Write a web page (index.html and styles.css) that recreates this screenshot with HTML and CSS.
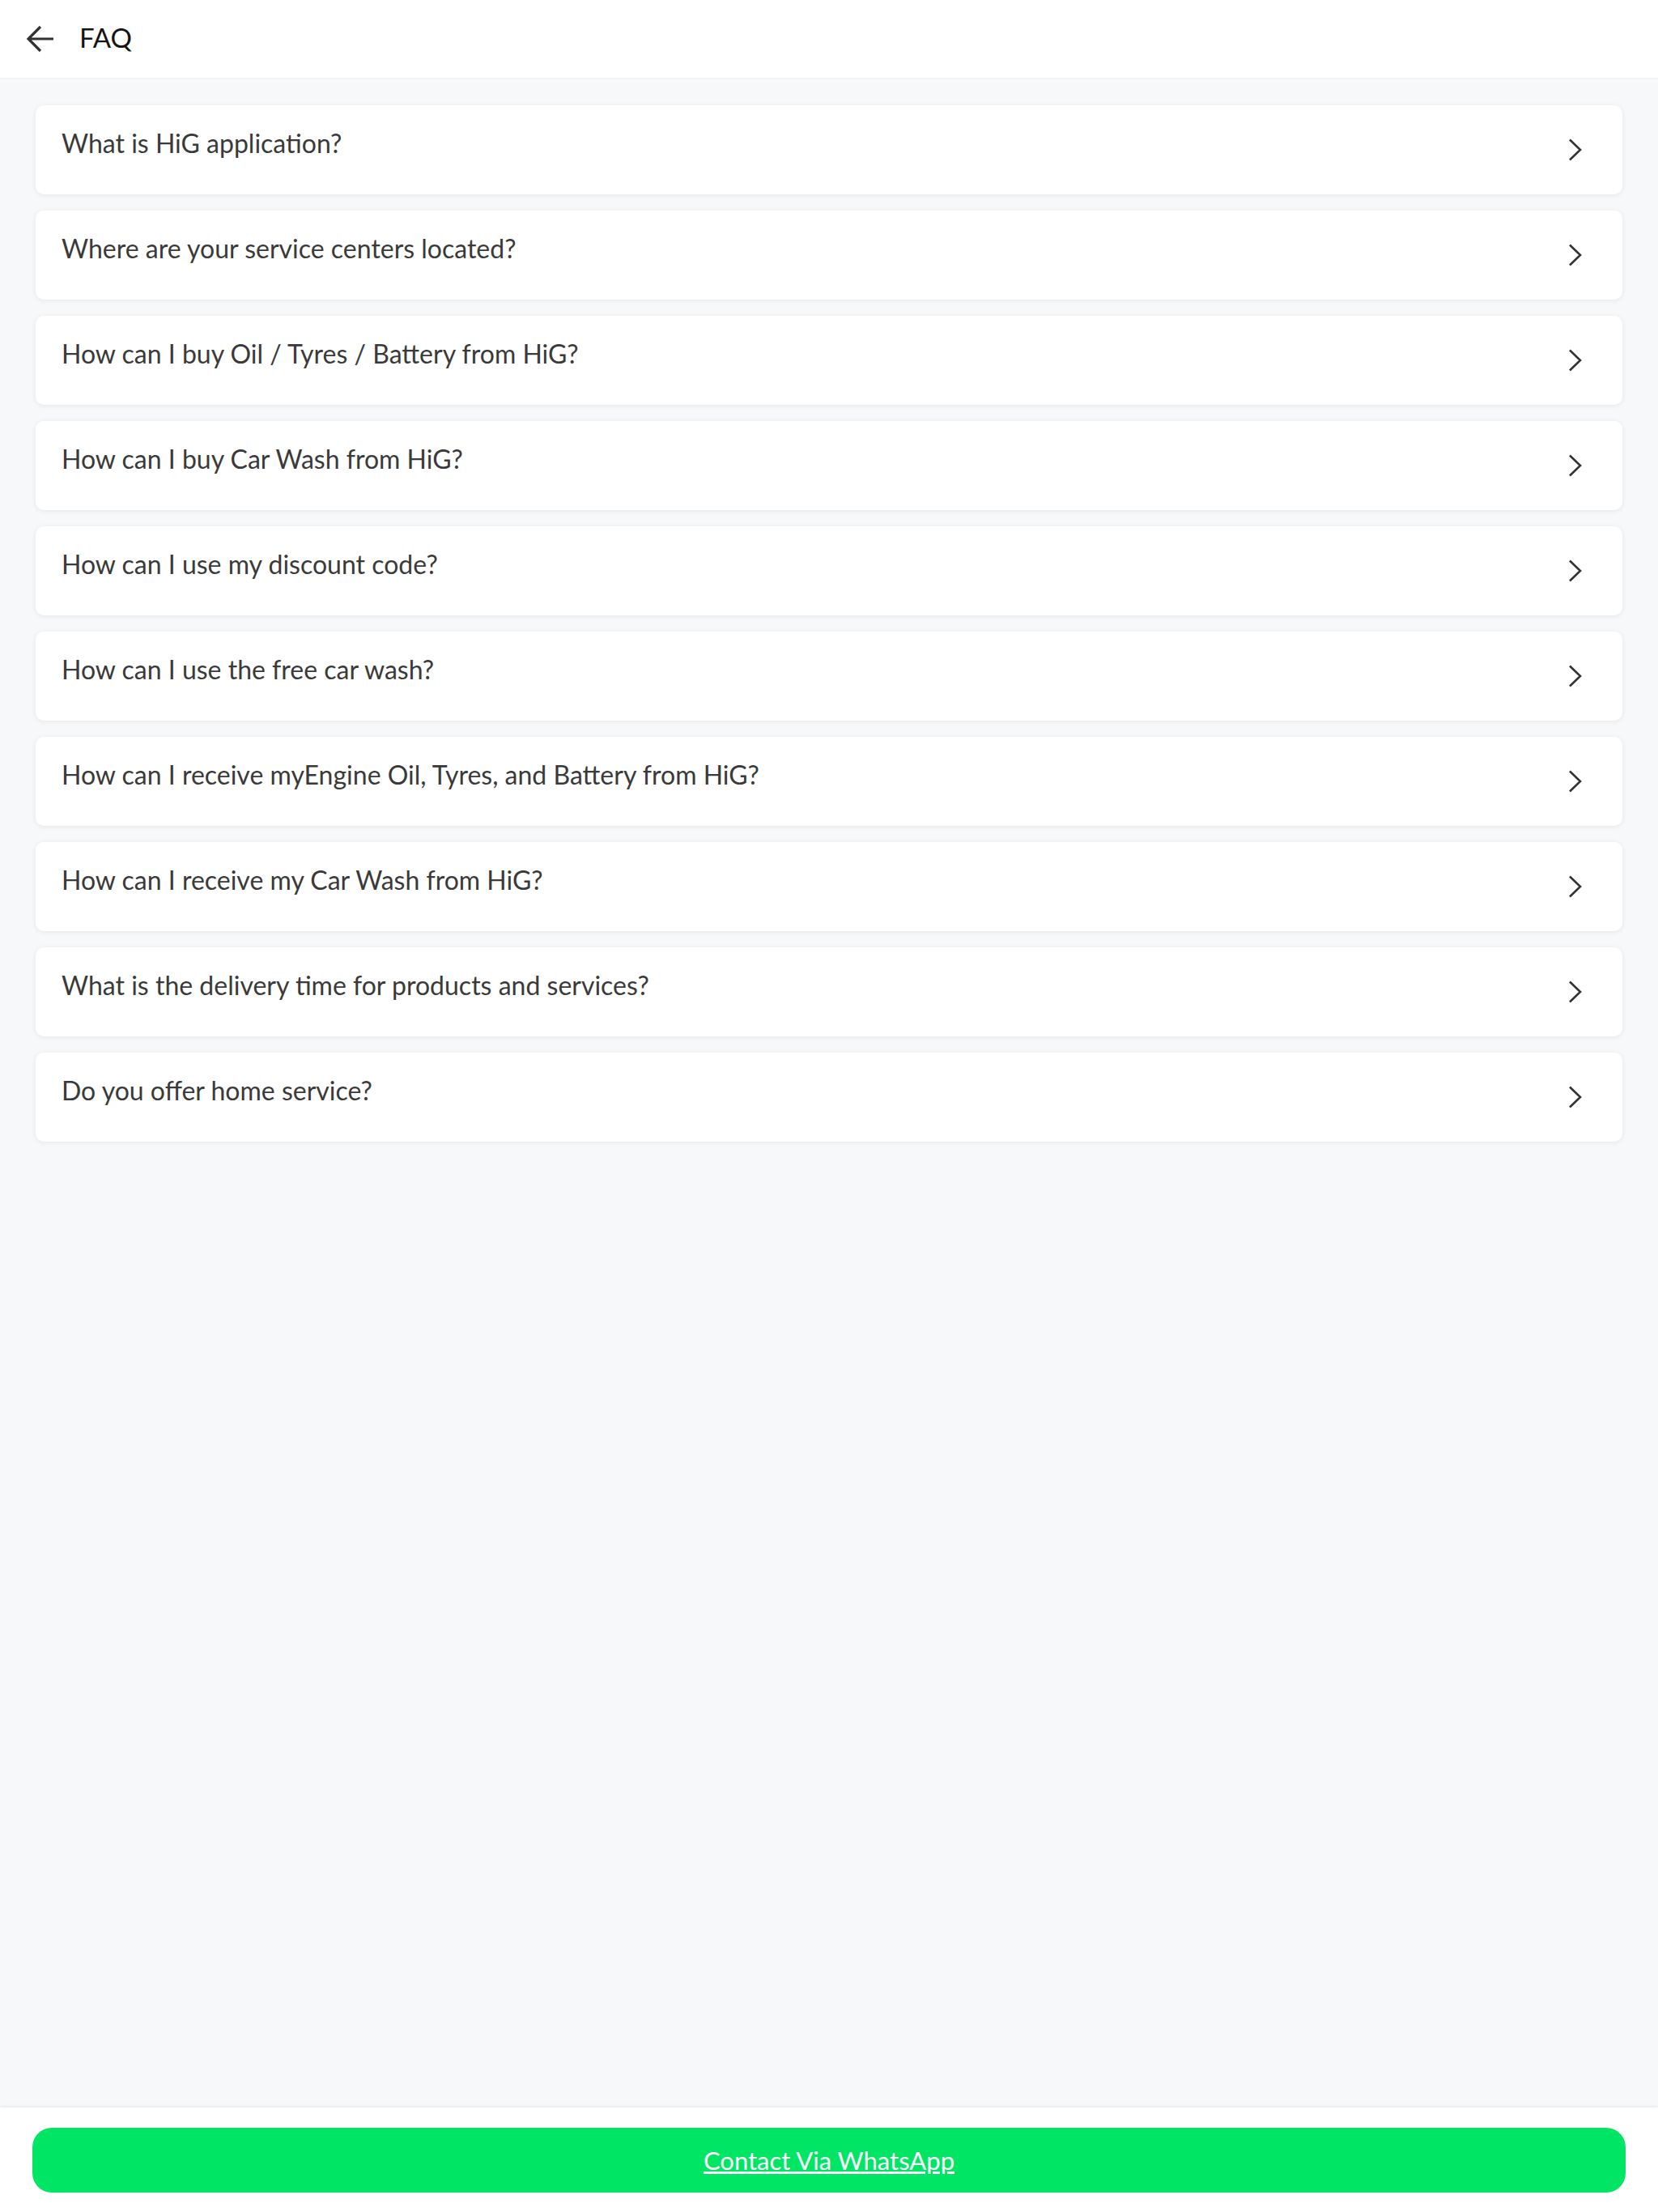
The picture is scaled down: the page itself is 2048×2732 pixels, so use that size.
FILE: index.html
```html
<!DOCTYPE html>
<html lang="en">
<head>
    <meta charset="UTF-8">
    <meta name="viewport" content="width=device-width, initial-scale=1.0">
    <title>FAQ</title>
    <link rel="stylesheet" href="styles.css">
</head>
<body>
    <div class="page">
        <header class="top-bar">
            <button class="back-button" aria-label="Back">
                <svg width="36" height="36" viewBox="0 0 36 36">
                    <path d="M34 18 H3 M18 3 L3 18 L18 33" fill="none" stroke="#333" stroke-width="3.2"/>
                </svg>
            </button>
            <h1 class="top-bar-title">FAQ</h1>
        </header>

        <main class="faq-list">
            <div class="faq-item">
                <span class="faq-question">What is HiG application?</span>
                <svg class="faq-chevron" width="18" height="28" viewBox="0 0 18 28"><polyline points="2,1.5 15,14 2,26.5"/></svg>
            </div>
            <div class="faq-item">
                <span class="faq-question">Where are your service centers located?</span>
                <svg class="faq-chevron" width="18" height="28" viewBox="0 0 18 28"><polyline points="2,1.5 15,14 2,26.5"/></svg>
            </div>
            <div class="faq-item">
                <span class="faq-question">How can I buy Oil / Tyres / Battery from HiG?</span>
                <svg class="faq-chevron" width="18" height="28" viewBox="0 0 18 28"><polyline points="2,1.5 15,14 2,26.5"/></svg>
            </div>
            <div class="faq-item">
                <span class="faq-question">How can I buy Car Wash from HiG?</span>
                <svg class="faq-chevron" width="18" height="28" viewBox="0 0 18 28"><polyline points="2,1.5 15,14 2,26.5"/></svg>
            </div>
            <div class="faq-item">
                <span class="faq-question">How can I use my discount code?</span>
                <svg class="faq-chevron" width="18" height="28" viewBox="0 0 18 28"><polyline points="2,1.5 15,14 2,26.5"/></svg>
            </div>
            <div class="faq-item">
                <span class="faq-question">How can I use the free car wash?</span>
                <svg class="faq-chevron" width="18" height="28" viewBox="0 0 18 28"><polyline points="2,1.5 15,14 2,26.5"/></svg>
            </div>
            <div class="faq-item">
                <span class="faq-question">How can I receive myEngine Oil, Tyres, and Battery from HiG?</span>
                <svg class="faq-chevron" width="18" height="28" viewBox="0 0 18 28"><polyline points="2,1.5 15,14 2,26.5"/></svg>
            </div>
            <div class="faq-item">
                <span class="faq-question">How can I receive my Car Wash from HiG?</span>
                <svg class="faq-chevron" width="18" height="28" viewBox="0 0 18 28"><polyline points="2,1.5 15,14 2,26.5"/></svg>
            </div>
            <div class="faq-item">
                <span class="faq-question">What is the delivery time for products and services?</span>
                <svg class="faq-chevron" width="18" height="28" viewBox="0 0 18 28"><polyline points="2,1.5 15,14 2,26.5"/></svg>
            </div>
            <div class="faq-item">
                <span class="faq-question">Do you offer home service?</span>
                <svg class="faq-chevron" width="18" height="28" viewBox="0 0 18 28"><polyline points="2,1.5 15,14 2,26.5"/></svg>
            </div>
        </main>

        <footer class="contact-bar">
            <a class="whatsapp-button" href="#">Contact Via WhatsApp</a>
        </footer>
    </div>
</body>
</html>
```

FILE: styles.css
```css
:root {
    --page-bg: #f7f8fa;
    --card-bg: #ffffff;
    --text-color: #3a3a3a;
    --title-color: #151515;
    --whatsapp-green: #00e564;
}

body {
    margin: 0;
    padding: 0;
    font-family: 'Lato', 'Noto Sans', sans-serif;
    background-color: var(--page-bg);
    color: var(--text-color);
}

.page {
    display: flex;
    flex-direction: column;
    min-height: 100vh;
}

/* Top bar */
.top-bar {
    display: flex;
    align-items: center;
    height: 96px;
    padding-left: 32px;
    background-color: #ffffff;
    box-shadow: 0 1px 2px rgba(0, 0, 0, 0.04);
}

.back-button {
    display: flex;
    padding: 0;
    border: none;
    background: none;
    cursor: pointer;
}

.top-bar-title {
    margin: 0 0 5px 30px;
    font-size: 33px;
    font-weight: 400;
    color: var(--title-color);
}

/* Question cards */
.faq-list {
    flex: 1;
    display: flex;
    flex-direction: column;
    gap: 20px;
    padding: 34px 44px;
}

.faq-item {
    display: flex;
    justify-content: space-between;
    align-items: center;
    box-sizing: border-box;
    height: 110px;
    padding: 0 49px 0 32px;
    background-color: var(--card-bg);
    border-radius: 10px;
    box-shadow: 0 1px 6px rgba(0, 0, 0, 0.08);
    cursor: pointer;
}

.faq-question {
    font-size: 32px;
    line-height: 38px;
    margin-bottom: 17px;
}

.faq-chevron polyline {
    fill: none;
    stroke: #333333;
    stroke-width: 2.6;
}

/* Bottom contact bar */
.contact-bar {
    padding: 25px 40px 24px;
    background-color: #ffffff;
    box-shadow: 0 -1px 4px rgba(0, 0, 0, 0.07);
}

.whatsapp-button {
    display: flex;
    justify-content: center;
    align-items: center;
    height: 80px;
    border-radius: 24px;
    background-color: var(--whatsapp-green);
    color: #ffffff;
    font-size: 31px;
    text-decoration: underline;
}
```
